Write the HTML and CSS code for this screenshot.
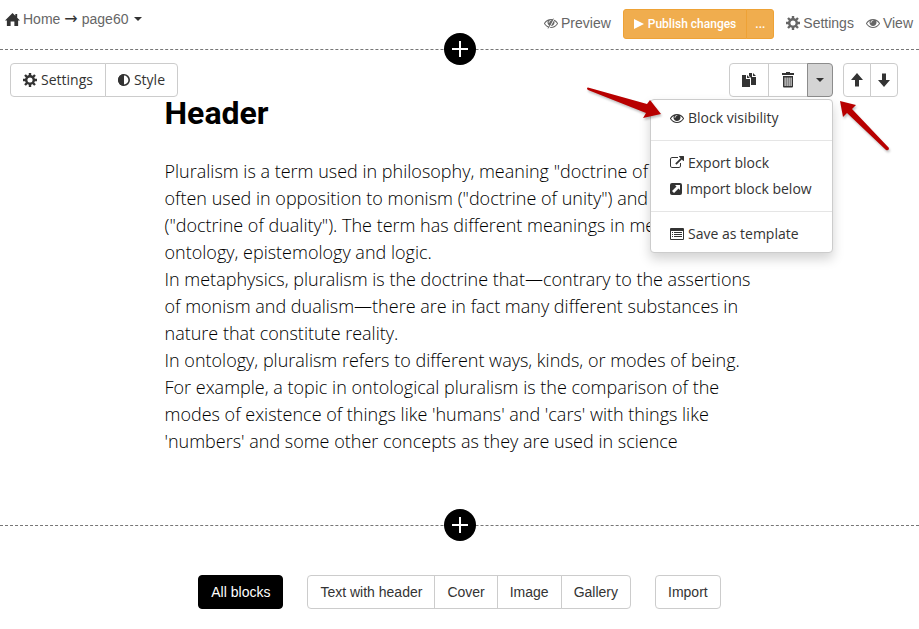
FILE: index.html
```html
<!DOCTYPE html>
<html lang="en">
<head>
  <meta charset="UTF-8">
  <title>page60</title>
  <link rel="stylesheet" href="styles.css">
</head>
<body>
  <!-- shared icons -->
  <svg class="sprite" aria-hidden="true">
    <symbol id="i-home" viewBox="0 0 16 16"><path d="M8 1 0 9h2v6h4v-5h4v5h4V9h2l-3-3V2h-2v2z"/></symbol>
    <symbol id="i-cog" viewBox="0 0 14 14">
      <path d="M7 0v14M0 7h14M2 2l10 10M12 2 2 12" fill="none" stroke="currentColor" stroke-width="2.4" mask="url(#cog-hole)"/>
      <circle cx="7" cy="7" r="3.8" fill="none" stroke="currentColor" stroke-width="2.4"/>
    </symbol>
    <mask id="cog-hole" maskUnits="userSpaceOnUse" x="0" y="0" width="14" height="14">
      <rect width="14" height="14" fill="#fff"/><circle cx="7" cy="7" r="3" fill="#000"/>
    </mask>
    <symbol id="i-eye" viewBox="0 0 1792 1792"><path d="M1664 960q-152-236-381-353 61 104 61 225 0 185-131.500 316.500t-316.500 131.500-316.500-131.500-131.500-316.500q0-121 61-225-229 117-381 353 133 205 333.500 326.500t434.500 121.500 434.500-121.500 333.500-326.500zm-720-384q0-20-14-34t-34-14q-125 0-214.500 89.500t-89.500 214.500q0 20 14 34t34 14 34-14 14-34q0-86 61-147t147-61q20 0 34-14t14-34zm848 384q0 34-20 69-140 230-376.500 368.500t-499.500 138.500-499.500-139-376.500-368q-20-35-20-69t20-69q140-229 376.500-368t499.500-139 499.500 139 376.500 368q20 35 20 69z"/></symbol>
    <mask id="slash" maskUnits="userSpaceOnUse" x="0" y="0" width="1792" height="1792">
      <rect width="1792" height="1792" fill="#fff"/><path d="M1330 330 650 1600" stroke="#000" stroke-width="130"/>
    </mask>
    <symbol id="i-eye-slash" viewBox="0 0 1792 1792">
      <g mask="url(#slash)"><use href="#i-eye" width="1792" height="1792"/></g>
      <path d="M1200 330 520 1600" stroke="currentColor" stroke-width="110"/>
    </symbol>
    <symbol id="i-adjust" viewBox="0 0 12 12"><circle cx="6" cy="6" r="5.200" fill="none" stroke="currentColor" stroke-width="1.600"/><path d="M6 0a6 6 0 0 0 0 12z"/></symbol>
    <symbol id="i-copy" viewBox="0 0 14 14"><path d="M0 2h4v4h4v8H0zM5 2l3 3H5zM7 0h3v4h4v8H9V5L7 3zM11 0l3 3h-3z"/></symbol>
    <symbol id="i-trash" viewBox="0 0 14 16"><path d="M5 0h4v1h4v2H1V1h4zM2 4h10v10.500q0 1-1 1H3q-1 0-1-1zm1.600 1.500V14h1V5.500zm2 0V14h1V5.500zm2 0V14h1V5.500zm2 0V14h1V5.500z" fill-rule="evenodd"/></symbol>
    <symbol id="i-up" viewBox="0 0 14 14"><path d="M7 0l6 7H9v6.500H5V7H1z"/></symbol>
    <symbol id="i-down" viewBox="0 0 14 14"><path d="M7 14l6-7H9V.5H5V7H1z"/></symbol>
    <symbol id="i-export" viewBox="0 0 1792 1792"><path d="M1408 928v320q0 119-84.500 203.500t-203.500 84.500h-832q-119 0-203.500-84.500t-84.500-203.500v-832q0-119 84.500-203.500t203.500-84.500h704q14 0 23 9t9 23v64q0 14-9 23t-23 9h-704q-66 0-113 47t-47 113v832q0 66 47 113t113 47h832q66 0 113-47t47-113v-320q0-14 9-23t23-9h64q14 0 23 9t9 23zm384-864v512q0 26-19 45t-45 19-45-19l-176-176-652 652q-10 10-23 10t-23-10l-114-114q-10-10-10-23t10-23l652-652-176-176q-19-19-19-45t19-45 45-19h512q26 0 45 19t19 45z"/></symbol>
    <symbol id="i-import" viewBox="0 0 12 12"><path d="M2 0h8q2 0 2 2v8q0 2-2 2H2q-2 0-2-2V2q0-2 2-2zm3 2 1.500 1.500L2 8l2 2 4.500-4.500L10 7V2z" fill-rule="evenodd"/></symbol>
    <symbol id="i-list" viewBox="0 0 14 12"><path d="M1 0h12q1 0 1 1v10q0 1-1 1H1q-1 0-1-1V1q0-1 1-1zm0 3v8h12V3zm1 1h1v1H2zm2 0h8v1H4zM2 6h1v1H2zm2 0h8v1H4zM2 8h1v1H2zm2 0h8v1H4z" fill-rule="evenodd"/></symbol>
  </svg>

  <header class="topbar">
    <nav class="path">
      <a href="#"><svg class="icon home"><use href="#i-home"/></svg>Home</a>
      <span class="sep">→</span>
      <a href="#">page60 <span class="caret"></span></a>
    </nav>
    <div class="actions">
      <a href="#"><svg class="icon"><use href="#i-eye-slash"/></svg>Preview</a>
      <div class="publish">
        <button type="button"><span class="play"></span>Publish changes</button>
        <button type="button" aria-label="More publish options">...</button>
      </div>
      <a href="#"><svg class="icon"><use href="#i-cog"/></svg>Settings</a>
      <a href="#"><svg class="icon"><use href="#i-eye"/></svg>View</a>
    </div>
  </header>

  <div class="divider"><button type="button" class="add" aria-label="Add block"></button></div>

  <section class="block">
    <div class="toolbar">
      <div class="btn-group">
        <button type="button"><svg class="icon"><use href="#i-cog"/></svg>Settings</button>
        <button type="button"><svg class="icon square"><use href="#i-adjust"/></svg>Style</button>
      </div>
      <div class="tools">
        <div class="dropdown">
          <div class="btn-group">
            <button type="button" aria-label="Copy block"><svg class="icon"><use href="#i-copy"/></svg></button>
            <button type="button" aria-label="Delete block"><svg class="icon trash"><use href="#i-trash"/></svg></button>
            <button type="button" class="toggle active" aria-label="More actions" aria-expanded="true"><span class="caret"></span></button>
          </div>
          <ul class="menu">
            <li><a href="#"><svg class="icon"><use href="#i-eye"/></svg>Block visibility</a></li>
            <li class="line"></li>
            <li><a href="#"><svg class="icon"><use href="#i-export"/></svg>Export block</a></li>
            <li><a href="#"><svg class="icon square"><use href="#i-import"/></svg>Import block below</a></li>
            <li class="line"></li>
            <li><a href="#"><svg class="icon list"><use href="#i-list"/></svg>Save as template</a></li>
          </ul>
          <svg class="pointer to-item" viewBox="0 0 76 36" aria-hidden="true"><path d="M2 1.500 61 18 64 14 75 28 57 32 60 27 2 4Q0 2 2 1.500z"/></svg>
        </div>
        <div class="dropdown">
          <div class="btn-group move">
            <button type="button" aria-label="Move up"><svg class="icon"><use href="#i-up"/></svg></button>
            <button type="button" aria-label="Move down"><svg class="icon"><use href="#i-down"/></svg></button>
          </div>
          <svg class="pointer to-toggle" viewBox="0 0 52 52" aria-hidden="true"><path d="M1 1 17 5 13 9 50 48Q50 51 47 50L8 13 4 17z"/></svg>
        </div>
      </div>
    </div>

    <article class="content">
      <h2>Header</h2>
      <p>Pluralism is a term used in philosophy, meaning "doctrine of multiplicity", often used in opposition to monism ("doctrine of unity") and dualism ("doctrine of duality"). The term has different meanings in metaphysics, ontology, epistemology and logic.</p>
      <p>In metaphysics, pluralism is the doctrine that—contrary to the assertions of monism and dualism—there are in fact many different substances in nature that constitute reality.</p>
      <p>In ontology, pluralism refers to different ways, kinds, or modes of being. For example, a topic in ontological pluralism is the comparison of the modes of existence of things like 'humans' and 'cars' with things like 'numbers' and some other concepts as they are used in science</p>
    </article>
  </section>

  <div class="divider"><button type="button" class="add" aria-label="Add block"></button></div>

  <footer class="block-types">
    <button type="button" class="all">All blocks</button>
    <div class="btn-group">
      <button type="button">Text with header</button>
      <button type="button">Cover</button>
      <button type="button">Image</button>
      <button type="button">Gallery</button>
    </div>
    <div class="btn-group">
      <button type="button">Import</button>
    </div>
  </footer>
</body>
</html>
```
FILE: styles.css
```css
* {
  box-sizing: border-box;
}
body {
  margin: 0;
  background: #fff;
  color: #333;
  font-family: "Liberation Sans", Arial, sans-serif;
  font-size: 14px;
  line-height: 20px;
}
a {
  color: inherit;
  text-decoration: none;
}
button {
  font: inherit;
  color: inherit;
  margin: 0;
  cursor: pointer;
}
.sprite {
  position: absolute;
  width: 0;
  height: 0;
}
.icon {
  width: 14px;
  height: 14px;
  flex: none;
  fill: currentColor;
}
.caret {
  display: inline-block;
  border: 4px solid transparent;
  border-top-color: currentColor;
  border-bottom: 0;
}

/* top bar */
.topbar {
  display: flex;
  justify-content: space-between;
  height: 49px;
  padding: 9px 6px 0 5px;
  color: #666;
}
.path, .path a {
  display: flex;
  align-items: center;
  height: 20px;
}
.path {
  gap: 4px;
}
.path a {
  gap: 3px;
}
.path .icon, .path .caret, .sep {
  color: #333;
}
.sep {
  font-family: "DejaVu Sans", sans-serif;
  font-size: 16px;
}
.path .caret {
  margin-left: 3px;
}
.home {
  width: 15px;
  height: 15px;
}
.actions {
  display: flex;
  align-items: center;
  gap: 12px;
  height: 28px;
}
.actions a {
  display: flex;
  align-items: center;
  gap: 3px;
}
.publish {
  display: flex;
  padding-top: 2px;
}
.publish button {
  display: flex;
  align-items: center;
  gap: 4px;
  height: 30px;
  padding: 0 10px;
  border: 1px solid #eea236;
  border-radius: 3px 0 0 3px;
  background: #f0ad4e;
  color: #fff;
  font-family: Roboto, sans-serif;
  font-size: 12px;
  font-weight: 500;
}
.publish button + button {
  margin-left: -1px;
  padding: 0 8px;
  border-radius: 0 3px 3px 0;
}
.play {
  border: 5px solid transparent;
  border-left: 10px solid #fff;
  border-right: 0;
}

/* dashed line with the plus button */
.divider {
  display: flex;
  justify-content: center;
  align-items: flex-end;
  height: 1px;
  border-top: 1px dashed #777;
}
.add {
  flex: none;
  z-index: 1;
  width: 32px;
  height: 32px;
  margin-bottom: -15px;
  padding: 0;
  border: 0;
  border-radius: 50%;
  background:
    linear-gradient(#fff, #fff) center / 16px 2px no-repeat,
    linear-gradient(#fff, #fff) center / 2px 16px no-repeat,
    #000;
}

/* buttons */
.btn-group {
  display: flex;
}
.btn-group button, .all {
  display: flex;
  align-items: center;
  gap: 4px;
  height: 34px;
  padding: 0 12px;
  border: 1px solid #ccc;
  background: #fff;
}
.btn-group button + button {
  margin-left: -1px;
}
.btn-group button:first-child {
  border-top-left-radius: 4px;
  border-bottom-left-radius: 4px;
}
.btn-group button:last-child {
  border-top-right-radius: 4px;
  border-bottom-right-radius: 4px;
}
.btn-group button:hover {
  background: #e6e6e6;
}

/* block */
.block {
  padding: 13px 0 70px;
}
.toolbar {
  display: flex;
  justify-content: space-between;
  padding: 0 21px 0 10px;
  font-family: "Open Sans", sans-serif;
}
.tools {
  display: flex;
  gap: 10px;
}
.dropdown {
  position: relative;
}
.trash {
  height: 16px;
}
.btn-group .toggle {
  padding: 0 8px;
}
.btn-group .active {
  border-color: #8c8c8c;
  background: #d4d4d4;
}
.btn-group.move button {
  padding: 0 6px;
}
.menu {
  position: absolute;
  z-index: 1;
  top: 36px;
  right: 0;
  width: 183px;
  margin: 0;
  padding: 5px 0;
  border: 1px solid #ccc;
  border-radius: 4px;
  background: #fff;
  box-shadow: 0 6px 12px rgba(0,0,0,0.175);
  list-style: none;
}
.menu a {
  display: flex;
  align-items: center;
  gap: 4px;
  padding: 3px 19px;
  white-space: nowrap;
}
.menu a:hover {
  background: #f5f5f5;
}
.menu .line {
  height: 1px;
  margin: 9px 0;
  background: #e5e5e5;
}
.square {
  width: 12px;
  height: 12px;
}
.menu .list {
  height: 12px;
}
.pointer {
  position: absolute;
  z-index: 2;
  fill: #b80000;
  filter: drop-shadow(1px 2px 1px rgba(0,0,0,0.25));
}
.to-item {
  top: 23px;
  right: 171px;
  width: 76px;
  height: 36px;
}
.to-toggle {
  top: 37px;
  left: -4px;
  width: 52px;
  height: 52px;
}
.content {
  max-width: 590px;
  margin: 0 auto;
  color: #000;
  font-family: "Open Sans", sans-serif;
  font-size: 18px;
  font-weight: 300;
  line-height: 27px;
}
.content h2 {
  margin: 0 0 29px;
  font-family: Roboto, sans-serif;
  font-size: 32px;
  font-weight: 700;
  line-height: 32px;
}
.content p {
  margin: 0;
}

/* block types */
.block-types {
  display: flex;
  justify-content: center;
  gap: 24px;
  padding: 49px 0 20px;
}
.all {
  border-color: #000;
  border-radius: 4px;
  background: #000;
  color: #fff;
}
```
